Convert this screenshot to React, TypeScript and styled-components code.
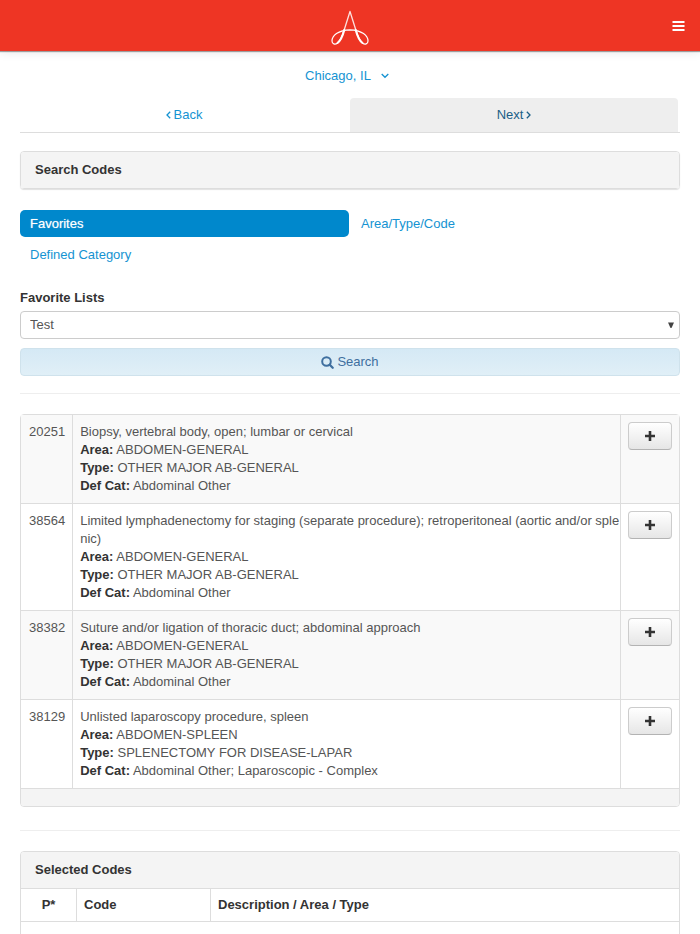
import React from "react";
import styled, { createGlobalStyle, css } from "styled-components";

const GlobalStyle = createGlobalStyle`
  *, *::before, *::after { box-sizing: border-box; }
  body {
    margin: 0;
    background: #fff;
    color: #555;
    font-family: "Liberation Sans", Arial, sans-serif;
    font-size: 13px;
    line-height: 18px;
  }
  button, select { font: inherit; }
  a { color: #1593d2; text-decoration: none; }
`;

const Header = styled.header`
  display: grid;
  grid-template-columns: 1fr auto 1fr;
  align-items: center;
  height: 51px;
  padding: 0 15px;
  background: #ee3524;
  box-shadow: 0 1px 1px rgba(0, 0, 0, 0.35), 0 1px 10px rgba(0, 0, 0, 0.1);
`;

const LogoLink = styled.a`
  display: flex;
  grid-column: 2;
  padding-top: 4px;
`;

const MenuButton = styled.button`
  display: flex;
  justify-self: end;
  padding: 0;
  border: 0;
  background: none;
  color: #fff;
  cursor: pointer;
`;

const Page = styled.main`
  padding: 0 20px;
`;

const LocationBar = styled.div`
  display: flex;
  justify-content: center;
  padding: 16px 0 13px;
`;

const LocationLink = styled.a`
  display: flex;
  align-items: center;
  gap: 10px;
  margin-right: 6px;
`;

const Steps = styled.nav`
  display: grid;
  grid-template-columns: 1fr 1fr;
  border-bottom: 1px solid #ddd;
  margin-bottom: 18px;
`;

const Step = styled.a<{ $active?: boolean }>`
  display: flex;
  align-items: center;
  justify-content: center;
  gap: 3px;
  height: 34px;
  margin-right: 2px;
  border-radius: 4px 4px 0 0;
  ${(p) => p.$active && css`
    background: #eee;
    color: #1a5f87;
  `}
`;

const Panel = styled.section<{ $raised?: boolean }>`
  border: 1px solid #ddd;
  border-radius: 4px;
  box-shadow: ${(p) => (p.$raised ? "0 1px 1px rgba(0, 0, 0, 0.12)" : "none")};
`;

const ResultPanel = styled(Panel)`
  margin-bottom: 23px;
`;

const PanelTitle = styled.h2`
  margin: 0;
  padding: 9px 14px;
  border-radius: 3px 3px 0 0;
  background: #f4f4f4;
  color: #333;
  font-size: 13px;
  font-weight: bold;
  line-height: 18px;
`;

const Pills = styled.nav`
  display: grid;
  grid-template-columns: 1fr 1fr;
  gap: 4px 2px;
  margin: 21px 0;
`;

const Pill = styled.a<{ $active?: boolean }>`
  height: 27px;
  padding: 5px 10px;
  border-radius: 5px;
  ${(p) => p.$active && css`
    background: #0088cc;
    color: #fff;
    text-shadow: 0 0 1px rgba(255, 255, 255, 0.6);
  `}
`;

const Label = styled.label`
  display: block;
  margin-bottom: 4px;
  color: #333;
  font-weight: bold;
`;

const SelectWrap = styled.div`
  display: grid;
  align-items: center;
  margin-bottom: 9px;

  > * { grid-area: 1 / 1; }
  > svg { justify-self: end; margin-right: 6px; pointer-events: none; }
`;

const Select = styled.select`
  width: 100%;
  height: 28px;
  padding: 0 24px 0 9px;
  border: 1px solid #ccc;
  border-radius: 4px;
  background: #fff;
  color: #555;
  appearance: none;
`;

const SearchButton = styled.button`
  display: flex;
  align-items: center;
  justify-content: center;
  gap: 3px;
  width: 100%;
  height: 28px;
  border: 1px solid #cfe2ec;
  border-radius: 4px;
  background: linear-gradient(#d5e9f5, #e0eff7);
  color: #3f6f9f;
  cursor: pointer;
`;

const Divider = styled.hr`
  height: 1px;
  margin: 17px 0 20px;
  border: 0;
  background: #eee;
`;

const ResultTable = styled.table`
  width: 100%;
  border-spacing: 0;

  td {
    padding: 8px 7px;
    border-bottom: 1px solid #ddd;
    vertical-align: top;
  }
  td:first-child { padding-left: 8px; }
  td + td { border-left: 1px solid #ddd; }
  tr:nth-child(odd) td { background: #f9f9f9; }
  tr td:nth-child(2) { padding-right: 0; }
  td:last-child { padding-top: 7px; }
`;

const DescriptionCell = styled.td`
  width: 100%;
  word-break: break-all;
`;

const Field = styled.div`
  strong { color: #333; }
`;

const AddButton = styled.button`
  display: flex;
  align-items: center;
  justify-content: center;
  width: 44px;
  height: 28px;
  padding: 0;
  border: 1px solid #ccc;
  border-bottom-color: #b3b3b3;
  border-radius: 4px;
  background: linear-gradient(#fff, #e6e6e6);
  color: #333;
  cursor: pointer;
`;

const PanelFooter = styled.footer`
  height: 17px;
  border-radius: 0 0 3px 3px;
  background: #f4f4f4;
`;

const SelectedTable = styled.table`
  width: 100%;
  border-spacing: 0;
  border-top: 1px solid #ddd;

  th {
    padding: 7px;
    border-bottom: 1px solid #ddd;
    color: #333;
    text-align: left;
  }
  th + th { border-left: 1px solid #ddd; }
  th:nth-child(1) { width: 55px; text-align: center; }
  th:nth-child(2) { width: 134px; }
  td { height: 44px; }
`;

const Logo = () => (
  <svg width="38" height="36" viewBox="0 0 38 36" fill="none" stroke="#fff" strokeLinecap="round" aria-hidden="true">
    <path d="M19 1.500 L13 20.500 M19 1.500 L25 20.500" strokeWidth="1.300" opacity="0.850" />
    <path d="M13 20 C11.500 25 9.500 30.500 6.500 33 C4 35 1 34 1 31 C1 26 7 20 19 19.800 C31 20 37 26 37 31 C37 34 34 35 31.500 33 C28.500 30.500 26.500 25 25 20" strokeWidth="1.200" />
    <path d="M13.300 20 C12 25 9.800 30.500 6.500 33 M24.700 20 C26 25 28.200 30.500 31.500 33" strokeWidth="2" />
  </svg>
);

const MenuIcon = () => (
  <svg width="13" height="11" viewBox="0 0 13 11" fill="currentColor" aria-hidden="true">
    <path d="M0.500 1h12v2H0.500zM0.500 5h12v2H0.500zM0.500 9h12v2H0.500z" />
  </svg>
);

const ChevronDown = () => (
  <svg width="8" height="6" viewBox="0 0 8 6" fill="none" stroke="currentColor" strokeWidth="1.300" aria-hidden="true">
    <path d="M0.700 1 4 4.300 7.300 1" />
  </svg>
);

const Angle = ({ right }: { right?: boolean }) => (
  <svg width="5" height="8" viewBox="0 0 5 8" fill="none" stroke="currentColor" strokeWidth="1.300" aria-hidden="true">
    <path d={right ? "M0.800 0.800 4 4 0.800 7.200" : "M4.200 0.800 1 4 4.200 7.200"} />
  </svg>
);

const SearchIcon = () => (
  <svg width="13" height="13" viewBox="0 0 13 13" fill="none" stroke="currentColor" aria-hidden="true">
    <circle cx="5.500" cy="5.500" r="4.300" strokeWidth="2" />
    <path d="M8.700 8.700 11.700 11.700" strokeWidth="2.300" strokeLinecap="round" />
  </svg>
);

const PlusIcon = () => (
  <svg width="10" height="10" viewBox="0 0 10 10" stroke="currentColor" strokeWidth="2.600" aria-hidden="true">
    <path d="M5 0v10M0 5h10" />
  </svg>
);

const Caret = () => (
  <svg width="6" height="6" viewBox="0 0 6 6" fill="#444" aria-hidden="true">
    <path d="M0 0.500h6L3.500 6h-1z" />
  </svg>
);

const results = [
  { code: "20251", text: "Biopsy, vertebral body, open; lumbar or cervical", area: "ABDOMEN-GENERAL", type: "OTHER MAJOR AB-GENERAL", cat: "Abdominal Other" },
  { code: "38564", text: "Limited lymphadenectomy for staging (separate procedure); retroperitoneal (aortic and/or splenic)", area: "ABDOMEN-GENERAL", type: "OTHER MAJOR AB-GENERAL", cat: "Abdominal Other" },
  { code: "38382", text: "Suture and/or ligation of thoracic duct; abdominal approach", area: "ABDOMEN-GENERAL", type: "OTHER MAJOR AB-GENERAL", cat: "Abdominal Other" },
  { code: "38129", text: "Unlisted laparoscopy procedure, spleen", area: "ABDOMEN-SPLEEN", type: "SPLENECTOMY FOR DISEASE-LAPAR", cat: "Abdominal Other; Laparoscopic - Complex" },
];

export default function App() {
  return (
    <>
      <GlobalStyle />
      <Header>
        <LogoLink href="#" aria-label="Home"><Logo /></LogoLink>
        <MenuButton type="button" aria-label="Menu"><MenuIcon /></MenuButton>
      </Header>
      <Page>
        <LocationBar>
          <LocationLink href="#">Chicago, IL <ChevronDown /></LocationLink>
        </LocationBar>
        <Steps>
          <Step href="#"><Angle />Back</Step>
          <Step href="#" $active>Next<Angle right /></Step>
        </Steps>
        <Panel $raised>
          <PanelTitle>Search Codes</PanelTitle>
        </Panel>
        <Pills>
          <Pill href="#" $active>Favorites</Pill>
          <Pill href="#">Area/Type/Code</Pill>
          <Pill href="#">Defined Category</Pill>
        </Pills>
        <Label htmlFor="favorite-list">Favorite Lists</Label>
        <SelectWrap>
          <Select id="favorite-list"><option>Test</option></Select>
          <Caret />
        </SelectWrap>
        <SearchButton type="button"><SearchIcon />Search</SearchButton>
        <Divider />
        <ResultPanel>
          <ResultTable>
            <tbody>
              {results.map((r) => (
                <tr key={r.code}>
                  <td>{r.code}</td>
                  <DescriptionCell>
                    <div>{r.text}</div>
                    <Field><strong>Area:</strong> {r.area}</Field>
                    <Field><strong>Type:</strong> {r.type}</Field>
                    <Field><strong>Def Cat:</strong> {r.cat}</Field>
                  </DescriptionCell>
                  <td><AddButton type="button" aria-label={`Add ${r.code}`}><PlusIcon /></AddButton></td>
                </tr>
              ))}
            </tbody>
          </ResultTable>
          <PanelFooter />
        </ResultPanel>
        <Divider />
        <Panel>
          <PanelTitle>Selected Codes</PanelTitle>
          <SelectedTable>
            <thead>
              <tr><th>P*</th><th>Code</th><th>Description / Area / Type</th></tr>
            </thead>
            <tbody>
              <tr><td colSpan={3} /></tr>
            </tbody>
          </SelectedTable>
        </Panel>
      </Page>
    </>
  );
}
